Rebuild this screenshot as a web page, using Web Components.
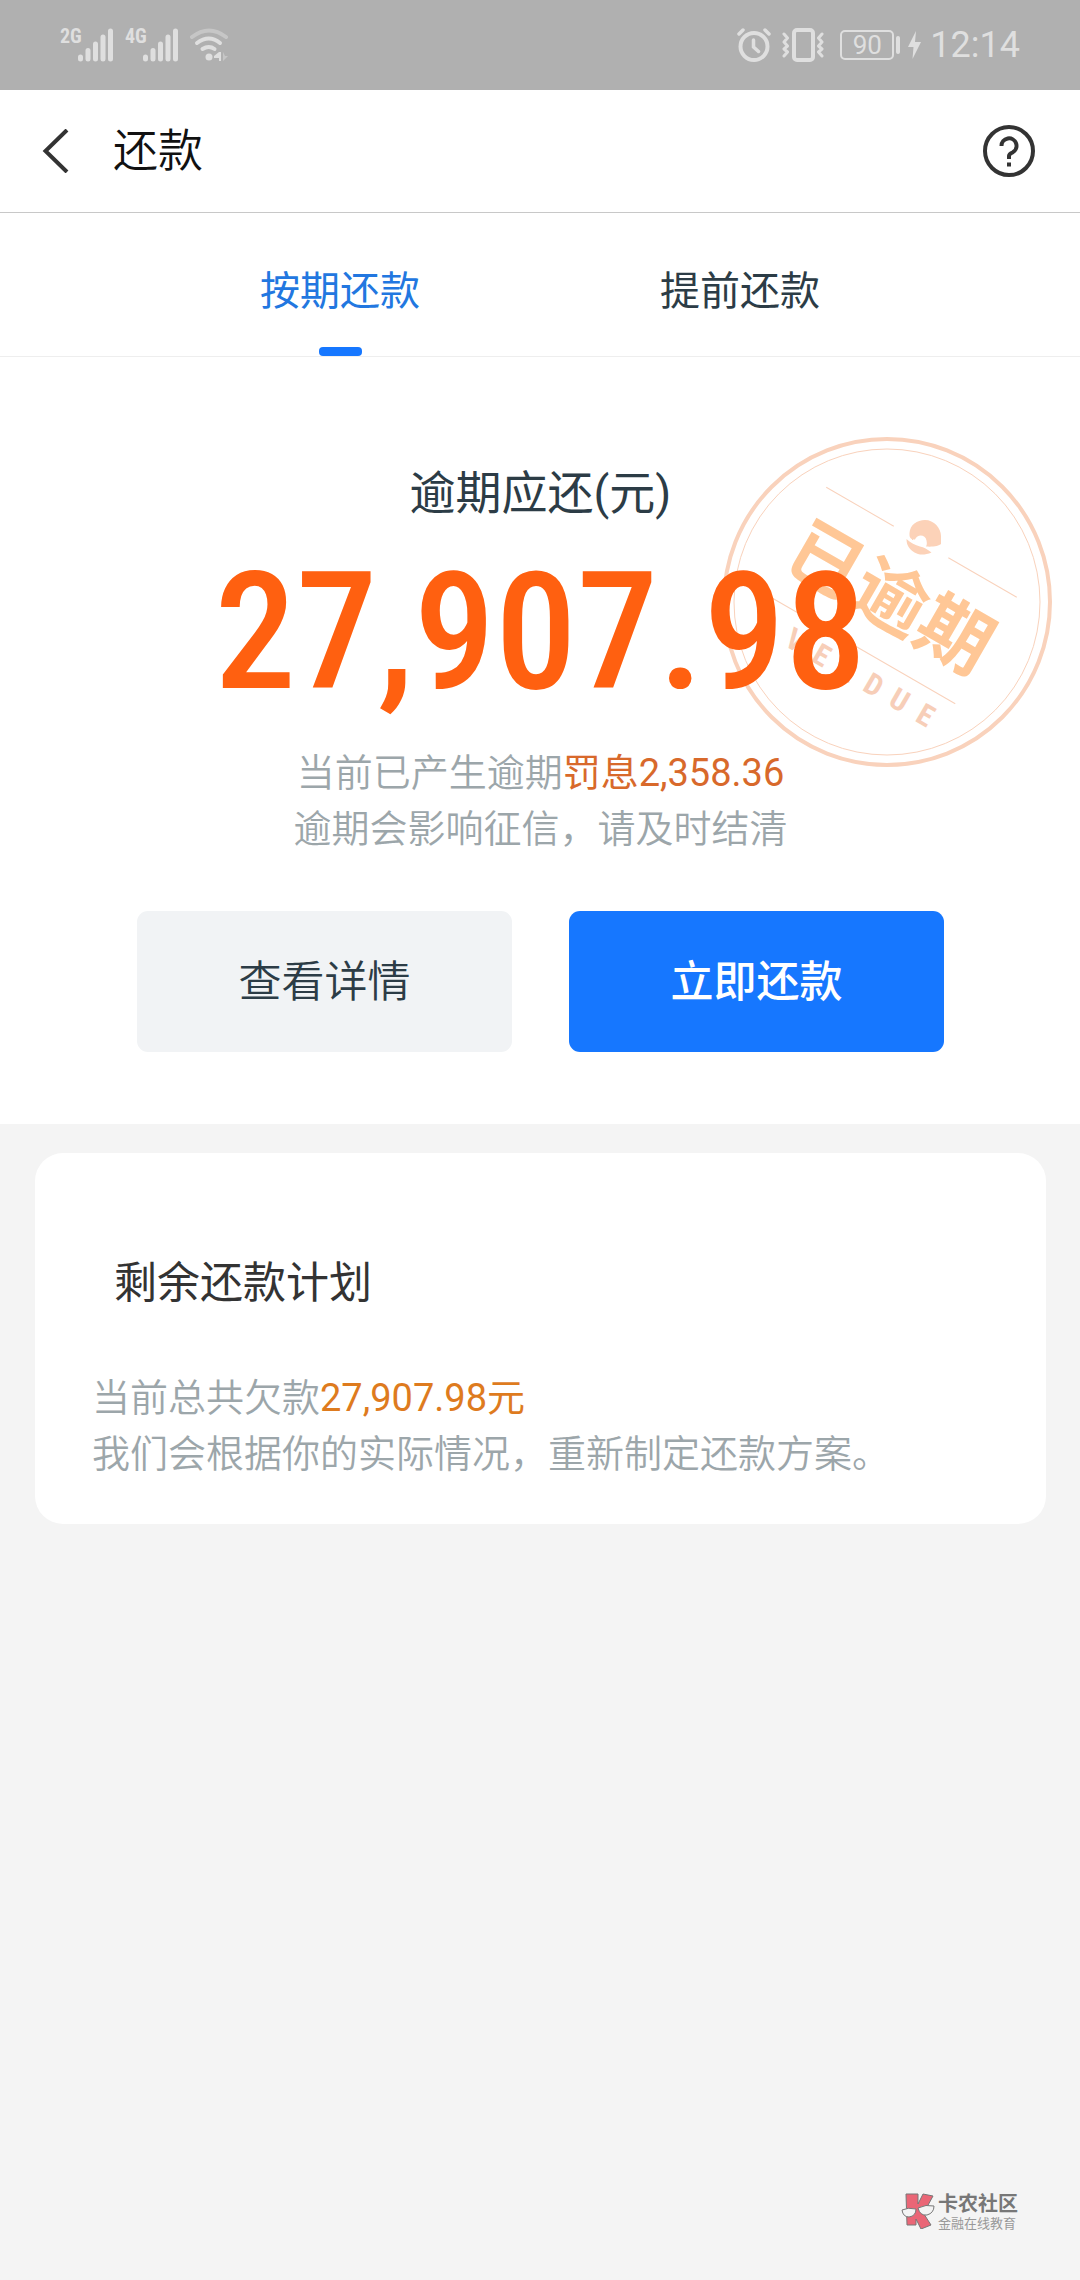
<!DOCTYPE html>
<html lang="zh-CN">
<head>
<meta charset="utf-8">
<meta name="viewport" content="width=device-width, initial-scale=1">
<title>还款</title>
<style>
    body {
        margin: 0;
        min-height: 100vh;
        display: flex;
        flex-direction: column;
        background: #f4f4f4;
        color: #2c3c46;
        font-family: Roboto, "Noto Sans CJK SC", sans-serif;
    }

    site-mark {
        margin-top: auto;
    }
</style>
</head>
<body>
    <status-bar time="12:14" battery="90"></status-bar>
    <nav-bar>还款</nav-bar>
    <tab-bar>
        <tab-item active>按期还款</tab-item>
        <tab-item>提前还款</tab-item>
    </tab-bar>
    <amount-panel>
        <overdue-stamp slot="stamp"></overdue-stamp>
        <span slot="label">逾期应还(元)</span>
        <span slot="amount">27,907.98</span>
        <note-text slot="note">当前已产生逾期<em>罚息2,358.36</em><br>逾期会影响征信，请及时结清</note-text>
        <action-button slot="actions">查看详情</action-button>
        <action-button slot="actions" variant="primary">立即还款</action-button>
    </amount-panel>
    <plan-card>
        <span slot="title">剩余还款计划</span>
        <note-text variant="amber">当前总共欠款<em>27,907.98元</em><br>我们会根据你的实际情况，重新制定还款方案。</note-text>
    </plan-card>
    <site-mark></site-mark>

<script>
/* 组件基类：把模板写入 shadow root */
class BaseElement extends HTMLElement {
    constructor() {
        super();
        this.attachShadow({ mode: 'open' });
    }

    connectedCallback() {
        this.shadowRoot.innerHTML = this.template();
    }
}

/* 系统状态栏 */
class StatusBar extends BaseElement {
    signal(label) {
        return `
            <span class="net">${label}</span>
            <svg class="bars" width="35" height="34" viewBox="0 0 35 34" stroke="#dfdfdf" stroke-width="5" stroke-linecap="round">
                <path d="M2.5 29v2M10 22.500v8.500M17.500 16v15M25 9v22M32.500 3v28"/>
            </svg>`;
    }

    template() {
        return `
            <style>
                :host {
                    display: flex;
                    justify-content: space-between;
                    align-items: center;
                    height: 90px;
                    padding: 0 60px;
                    background: #b0b0b0;
                    color: #dfdfdf;
                }

                .group {
                    display: flex;
                    align-items: center;
                }

                .net {
                    align-self: flex-start;
                    width: 18px;
                    font-family: "Roboto Condensed", Roboto, sans-serif;
                    font-size: 20px;
                    line-height: 16px;
                    font-weight: 700;
                }

                .bars {
                    margin-right: 12px;
                }

                .alarm {
                    margin-right: 11px;
                }

                .vibrate {
                    margin-right: 16px;
                }

                .battery {
                    box-sizing: border-box;
                    width: 54px;
                    height: 30px;
                    border: 2px solid #dfdfdf;
                    border-radius: 5px;
                    font-size: 26px;
                    line-height: 26px;
                    text-align: center;
                }

                .cap {
                    width: 4px;
                    height: 18px;
                    margin: 0 8px 0 2px;
                    border-radius: 2px;
                    background: #dfdfdf;
                }

                .time {
                    margin-left: 9px;
                    font-size: 36px;
                    line-height: 40px;
                }
            </style>
            <div class="group">
                ${this.signal('2G')}
                ${this.signal('4G')}
                <svg width="41" height="34" viewBox="2 0 41 34" fill="none" stroke="#dfdfdf" stroke-width="4" stroke-linecap="round">
                    <path d="M4 9Q21 -4 38 9" stroke="#c6c6c6"/>
                    <path d="M9 15Q21 6 32 15M14.500 21Q21 17 26.500 21"/>
                    <circle cx="21" cy="29" r="3.500" fill="#dfdfdf" stroke="none"/>
                    <path d="M33 24v9h-2v-3h-5v-2l5-4z" fill="#dfdfdf" stroke="none"/>
                    <path d="M35 24v9l5-5h-3z" fill="#c6c6c6" stroke="none"/>
                </svg>
            </div>
            <div class="group">
                <svg class="alarm" width="34" height="34" viewBox="0 0 34 34" fill="none" stroke="#dfdfdf" stroke-width="4" stroke-linecap="round">
                    <circle cx="17" cy="18.500" r="13.500"/>
                    <path d="M16.500 12v7l5 4.500M2 6l4-4M32 6l-4-4" stroke-width="3.500"/>
                </svg>
                <svg class="vibrate" width="42" height="34" viewBox="0 0 42 34" fill="none" stroke="#dfdfdf" stroke-width="4" stroke-linecap="round" stroke-linejoin="round">
                    <rect x="12" y="2" width="19" height="30" rx="3"/>
                    <path d="M2 6l3.500 4L2 14l3.500 4L2 21l3.500 3L2 28M40 6l-3.500 4L40 14l-3.500 4L40 21l-3.500 3L40 28" stroke-width="3"/>
                </svg>
                <span class="battery">${this.getAttribute('battery')}</span>
                <span class="cap"></span>
                <svg width="13" height="28" viewBox="0 0 13 28" fill="#dfdfdf"><path d="M8 0L0 16h5.500L4.500 28 13 11H7z"/></svg>
                <span class="time">${this.getAttribute('time')}</span>
            </div>
        `;
    }
}

/* 页面导航栏 */
class NavBar extends BaseElement {
    template() {
        return `
            <style>
                :host {
                    display: flex;
                    align-items: center;
                    height: 122px;
                    padding: 0 45px 0 42px;
                    background: #fff;
                    border-bottom: 1px solid #c8c8c8;
                }

                button {
                    display: flex;
                    padding: 0;
                    border: 0;
                    background: none;
                }

                h1 {
                    flex: 1;
                    margin: 2px 0 0 43px;
                    color: #111;
                    font-size: 45px;
                    line-height: 56px;
                    font-weight: 350;
                }
            </style>
            <button type="button" aria-label="返回">
                <svg width="28" height="44" viewBox="0 0 28 44" fill="none" stroke="#333" stroke-width="4">
                    <path d="M25 1L3.500 22 25 43"/>
                </svg>
            </button>
            <h1><slot></slot></h1>
            <button type="button" aria-label="帮助">
                <svg width="52" height="52" viewBox="0 0 52 52" fill="none" stroke="#333" stroke-width="4">
                    <circle cx="26" cy="26" r="24"/>
                    <path d="M18.500 21a7.500 7.500 0 1 1 11 6.500q-3.500 1.500-3.500 3.500v3M26 37.500v4"/>
                </svg>
            </button>
        `;
    }
}

/* 选项卡 */
class TabBar extends BaseElement {
    template() {
        return `
            <style>
                :host {
                    display: flex;
                    height: 143px;
                    padding: 0 140px;
                    background: #fff;
                    border-bottom: 1px solid #eee;
                }

                ::slotted(tab-item) {
                    flex: 1;
                }
            </style>
            <slot></slot>
        `;
    }
}

class TabItem extends BaseElement {
    template() {
        return `
            <style>
                :host {
                    display: flex;
                }

                button {
                    flex: 1;
                    display: flex;
                    flex-direction: column;
                    align-items: center;
                    justify-content: space-between;
                    padding: 51px 0 0;
                    border: 0;
                    background: none;
                    color: #2c3c46;
                    font: 400 40px/56px Roboto, "Noto Sans CJK SC", sans-serif;
                }

                button::after {
                    content: "";
                    width: 43px;
                    height: 9px;
                    border-radius: 4px;
                }

                :host([active]) button {
                    color: #2277e0;
                }

                :host([active]) button::after {
                    background: #1677ff;
                }
            </style>
            <button type="button"><slot></slot></button>
        `;
    }
}

/* 应还金额区域 */
class AmountPanel extends BaseElement {
    template() {
        return `
            <style>
                :host {
                    display: flex;
                    flex-direction: column;
                    align-items: center;
                    position: relative;
                    padding: 108px 136px 72px 137px;
                    background: #fff;
                    text-align: center;
                }

                /* 印章压在金额下层 */
                .stamp {
                    position: absolute;
                    top: 80px;
                    right: 28px;
                }

                .label,
                .amount,
                .note,
                .actions {
                    position: relative;
                }

                .label {
                    font-size: 46px;
                    line-height: 56px;
                }

                .amount {
                    margin-top: 42px;
                    color: #ff6010;
                    font-family: "Roboto Condensed", Roboto, sans-serif;
                    font-size: 163px;
                    line-height: 140px;
                    font-weight: 500;
                }

                .note {
                    margin-top: 42px;
                }

                .actions {
                    display: grid;
                    grid-template-columns: 1fr 1fr;
                    gap: 57px;
                    align-self: stretch;
                    margin-top: 54px;
                }
            </style>
            <div class="stamp"><slot name="stamp"></slot></div>
            <div class="label"><slot name="label"></slot></div>
            <div class="amount"><slot name="amount"></slot></div>
            <div class="note"><slot name="note"></slot></div>
            <div class="actions"><slot name="actions"></slot></div>
        `;
    }
}

/* “已逾期”印章 */
class OverdueStamp extends BaseElement {
    template() {
        return `
            <style>
                :host {
                    display: block;
                }

                svg {
                    display: block;
                }

                .main {
                    font: 700 74px "Noto Sans CJK SC", sans-serif;
                }

                .sub {
                    font: 700 30px "Roboto Condensed", Roboto, sans-serif;
                }
            </style>
            <svg width="330" height="330" viewBox="-165 -165 330 330">
                <g fill="none" stroke="#f9d2bc">
                    <circle r="163" stroke-width="4"/>
                    <circle r="153"/>
                    <path d="M-110-69h78M31-69h79M-110 54h220" transform="rotate(30)"/>
                </g>
                <path fill="#fcd2b8" d="M22.500-69C23-77 30-82 38-82c9 0 16 8 16 16v8c-2 2-8 3-15 2.500 1-2 1-3 .5-6-1-6-9-7-11.500-1-3 0-5-.5-5.500-4z"/>
                <path fill="#fcd2b8" d="M19.500-63C24-59 28-57 33-55.500c4 .5 7 2.500 11.500 6-7 3-13 2.500-17 0-5-3-8-7-8-13.500z"/>
                <g text-anchor="middle" transform="rotate(30)">
                    <text class="main" x="1" y="21" fill="#ffc796">已逾期</text>
                    <text class="sub" x="-94 -60 -30 0 30 60 90" y="89" fill="#f7ceb8">OVERDUE</text>
                </g>
            </svg>
        `;
    }
}

/* 说明文字，em 为高亮数字 */
class NoteText extends BaseElement {
    template() {
        return `
            <style>
                :host {
                    display: block;
                    color: #9ca6aa;
                    font-size: 38px;
                    line-height: 56px;
                    font-weight: 350;
                }

                ::slotted(em) {
                    color: #d8692b;
                    font-style: normal;
                    font-weight: 400;
                }

                :host([variant="amber"]) ::slotted(em) {
                    color: #de7b1e;
                }
            </style>
            <slot></slot>
        `;
    }
}

class ActionButton extends BaseElement {
    template() {
        return `
            <style>
                :host {
                    display: block;
                }

                button {
                    width: 100%;
                    height: 141px;
                    padding: 0;
                    border: 0;
                    border-radius: 11px;
                    background: #f1f3f5;
                    color: #2c3c46;
                    font: 350 43px/56px Roboto, "Noto Sans CJK SC", sans-serif;
                }

                :host([variant="primary"]) button {
                    background: #1677ff;
                    color: #fff;
                    font-weight: 500;
                }
            </style>
            <button type="button"><slot></slot></button>
        `;
    }
}

/* 剩余还款计划卡片 */
class PlanCard extends BaseElement {
    template() {
        return `
            <style>
                :host {
                    display: block;
                    margin: 29px 34px 0 35px;
                    padding: 102px 57px 42px;
                    border-radius: 28px;
                    background: #fff;
                }

                h2 {
                    margin: 0 22px 59px;
                    color: #333;
                    font-size: 43px;
                    line-height: 56px;
                    font-weight: 400;
                }
            </style>
            <h2><slot name="title"></slot></h2>
            <slot></slot>
        `;
    }
}

/* 右下角社区标识 */
class SiteMark extends BaseElement {
    template() {
        return `
            <style>
                :host {
                    display: flex;
                    justify-content: flex-end;
                    align-items: center;
                    gap: 3px;
                    padding: 0 62px 49px 0;
                    color: #777;
                    font-family: "Noto Sans CJK SC", sans-serif;
                }

                .name {
                    font-size: 20px;
                    line-height: 24px;
                    font-weight: 700;
                }

                .slogan {
                    color: #999;
                    font-size: 13px;
                    line-height: 16px;
                }
            </style>
            <svg width="34" height="36" viewBox="0 0 34 36" stroke="#777">
                <path d="M5 1h12v10l5-10 10 2-6 11-5 4 9 14-10 4-5-10v6H6z" fill="#ea6676"/>
                <path d="M1 17q6-3 14-1 0 7-7 8-6 0-7-7zM17 15q8-4 16-2 0 7-7 9-7 1-9-7z" fill="#f4f4f4"/>
            </svg>
            <div>
                <div class="name">卡农社区</div>
                <div class="slogan">金融在线教育</div>
            </div>
        `;
    }
}

customElements.define('status-bar', StatusBar);
customElements.define('nav-bar', NavBar);
customElements.define('tab-bar', TabBar);
customElements.define('tab-item', TabItem);
customElements.define('amount-panel', AmountPanel);
customElements.define('overdue-stamp', OverdueStamp);
customElements.define('note-text', NoteText);
customElements.define('action-button', ActionButton);
customElements.define('plan-card', PlanCard);
customElements.define('site-mark', SiteMark);
</script>
</body>
</html>
